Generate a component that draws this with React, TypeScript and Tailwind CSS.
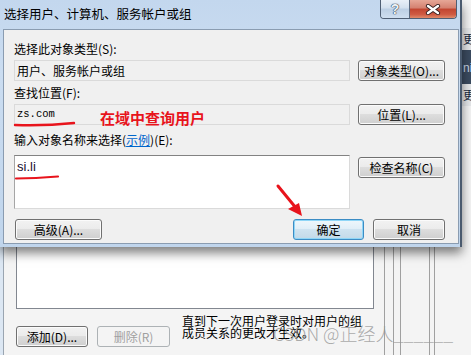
import React from 'react';
import clsx from 'clsx';

const cjk = "font-['Noto_Sans_CJK_SC','Noto_Sans',sans-serif]";

const WinButton = ({
  children,
  className,
  primary,
  disabled,
}: {
  children: React.ReactNode;
  className?: string;
  primary?: boolean;
  disabled?: boolean;
}) => (
  <div
    className={clsx(
      'flex h-[21px] items-center justify-center rounded-[3px] border text-[12px] leading-none',
      primary
        ? 'border-[#3c8cc4] bg-[linear-gradient(#eef7fc_0%,#e0eef7_50%,#cfe3f0_50%,#c2d9e8_100%)] text-black shadow-[inset_0_0_0_1px_#8fd6f7]'
        : disabled
          ? 'border-[#adb2b5] bg-[#f4f4f4] text-[#a0a0a0]'
          : 'border-[#707070] bg-[linear-gradient(#f2f2f2_0%,#ebebeb_50%,#dddddd_50%,#cfcfcf_100%)] text-black shadow-[inset_0_0_0_1px_#fbfbfb]',
      className
    )}
  >
    {children}
  </div>
);

const TitleButtons = () => (
  <div className="mr-[3px] flex h-[19px] self-start overflow-hidden rounded-b-[4px] border border-t-0 border-[#4f5f74]">
    <div className="flex w-[29px] items-center justify-center border-r border-[#5a6a80] bg-[linear-gradient(#e9f0f8_0%,#d3e0ee_45%,#bccfe4_50%,#cfdff0_100%)]">
      <span className="text-[14px] font-bold leading-none text-[#eef2f6] [text-shadow:0_0_1px_#2d3c50,0_0_1px_#2d3c50,0_0_1px_#2d3c50] font-['Liberation_Sans',sans-serif]">
        ?
      </span>
    </div>
    <div className="flex w-[46px] items-center justify-center bg-[linear-gradient(#e6a797_0%,#d4806f_45%,#c24530_50%,#cf5a42_80%,#e08a6a_100%)]">
      <svg width="16" height="11" viewBox="0 0 16 11">
        <path d="M3 2 L13 9 M13 2 L3 9" stroke="#3a2222" strokeWidth="4.2" strokeLinecap="round" />
        <path d="M3 2 L13 9 M13 2 L3 9" stroke="#ffffff" strokeWidth="2.4" strokeLinecap="round" />
      </svg>
    </div>
  </div>
);

export default function App() {
  return (
    <div className={clsx('relative h-[355px] w-[471px] overflow-hidden bg-[#f4f4f4]', cjk)}>
      {/* window behind the dialog */}
      <div className="absolute left-0 top-[190px] h-[165px] w-[471px] border-l-[3px] border-[#dce7f3]">
        <div className="h-full border-l border-[#9aa5b1] pl-[12px]">
          <div className="h-[119px] w-[358px] border border-[#828790] bg-white" />
          <div className="mt-[16px] flex items-start">
            <WinButton className="mt-[1px] h-[18px] w-[72px]">添加(D)...</WinButton>
            <WinButton disabled className="ml-[9px] mt-[1px] h-[18px] w-[73px]">
              删除(R)
            </WinButton>
            <div className="ml-[12px] -mt-[10px] text-[12px] leading-[12px] text-black">
              <div>直到下一次用户登录时对用户的组</div>
              <div>成员关系的更改才生效。</div>
            </div>
          </div>
        </div>
        {/* frame lines on the right */}
        <div className="absolute left-[381px] top-0 h-full w-px bg-[#a0a0a0]" />
        <div className="absolute left-[390px] top-0 h-full w-px bg-[#a0a0a0]" />
        <div className="absolute left-[397px] top-0 h-full w-px bg-[#a0a0a0]" />
        <div className="absolute left-[426px] top-0 h-full w-px bg-[#a0a0a0]" />
        <div className="absolute left-[431px] top-0 h-full w-px bg-[#a0a0a0]" />
      </div>

      {/* strip of another window on the right */}
      <div className="absolute left-[462px] top-[28px] flex w-[9px] flex-col overflow-hidden bg-[#e6e8ea] text-[12px] leading-none">
        <div className="flex h-[22px] items-center pl-[1px] text-[#1a2a40]">更</div>
        <div className="h-[10px] bg-[#3b4b60]" />
        <div className="flex h-[16px] items-center bg-[#3b4b60] pl-[1px] text-[#c9d6e6] font-['Liberation_Sans',sans-serif]">
          ni
        </div>
        <div className="h-[8px] bg-[#3b4b60]" />
        <div className="flex h-[22px] items-center pl-[1px] text-[#1a2a40]">更</div>
      </div>

      {/* dialog */}
      <div className="absolute left-0 top-0 flex w-[462px] flex-col border-r-2 border-[#4a5a6e] bg-[linear-gradient(#c3d7ee_0%,#cbddf1_30%,#c0d5ec_100%)] pb-[3px] shadow-[0_6px_10px_rgba(0,0,0,0.5)]">
        <div className="flex h-[29px] items-start">
          <div className="pl-[4px] pt-[6px] text-[12.5px] leading-[16px] text-black">选择用户、计算机、服务帐户或组</div>
          <div className="flex-1" />
          <TitleButtons />
        </div>

        <div className="ml-[3px] mr-[1px] border border-[#8a9cb1] bg-[#f0f0f0] pb-[3px] pl-[10px] pt-[11px] text-[12px] text-black">
          <div className="h-[16px] leading-[16px]">选择此对象类型(S):</div>
          <div className="mt-[3px] flex">
            <div className="flex h-[21px] w-[336px] items-center border border-[#dadada] bg-[#f0f0f0] pl-[2px] leading-none">
              用户、服务帐户或组
            </div>
            <WinButton className="ml-[8px] w-[87px]">对象类型(O)...</WinButton>
          </div>

          <div className="mt-[4px] h-[16px] leading-[16px]">查找位置(F):</div>
          <div className="mt-[3px] flex">
            <div className="flex h-[21px] w-[336px] items-center border border-[#dadada] bg-[#f0f0f0] pl-[2px] text-[10.5px] leading-none font-['Liberation_Mono',monospace]">
              zs.com
            </div>
            <WinButton className="ml-[8px] w-[87px]">位置(L)...</WinButton>
          </div>

          <div className="mt-[7px] h-[16px] leading-[16px]">
            输入对象名称来选择(<span className="text-[#0066cc] underline">示例</span>)(E):
          </div>
          <div className="mt-[7px] flex items-start">
            <div className="h-[54px] w-[336px] border border-[#dadada] border-l-[#a6a6a6] border-t-[#828282] bg-white pl-[2px] pt-[3px] text-[13px] leading-[15px] text-[#1a1030] font-['Liberation_Sans',sans-serif]">
              si.li
            </div>
            <WinButton className="ml-[8px] mt-[2px] h-[20px] w-[87px]">检查名称(C)</WinButton>
          </div>

          <div className="mt-[10px] flex">
            <WinButton className="ml-[1px] w-[87px]">高级(A)...</WinButton>
            <div className="flex-1" />
            <WinButton primary className="w-[71px]">确定</WinButton>
            <WinButton className="ml-[9px] mr-[13px] w-[72px]">取消</WinButton>
          </div>
        </div>
      </div>

      {/* red annotations */}
      <div className="absolute left-[100px] top-[109px] text-[15px] font-bold leading-[17px] text-[#e8141c]">在域中查询用户</div>
      <svg className="pointer-events-none absolute left-0 top-0" width="471" height="355">
        <path d="M15 125 Q45 126 74 123" stroke="#e8141c" strokeWidth="2.4" fill="none" strokeLinecap="round" />
        <path d="M16 178.5 Q35 178.3 58 176.5" stroke="#e8141c" strokeWidth="2.2" fill="none" strokeLinecap="round" />
        <path d="M278 186 L296 208" stroke="#e8141c" strokeWidth="3" strokeLinecap="round" />
        <polygon points="302,216 288,209 299,203" fill="#e8141c" />
      </svg>

      {/* watermark */}
      <div className="absolute left-[273px] top-[322px] text-[18px] font-light leading-[22px] text-[rgba(150,150,150,0.8)]">
        CSDN @正经人______
      </div>
    </div>
  );
}
